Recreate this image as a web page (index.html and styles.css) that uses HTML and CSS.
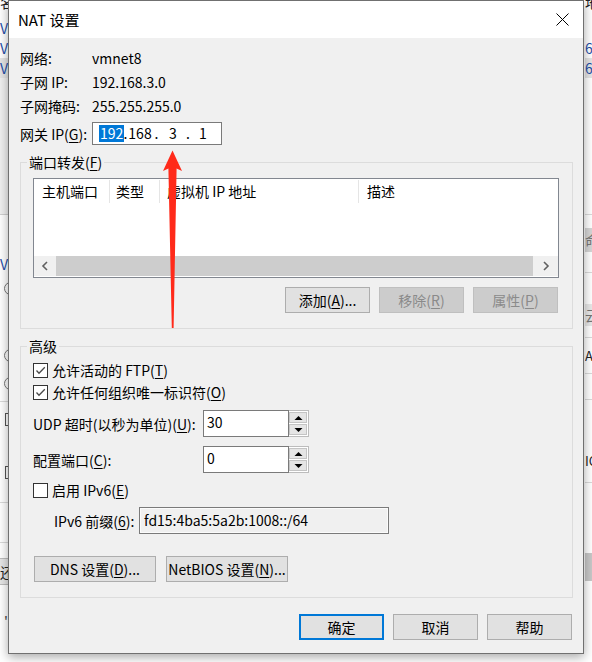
FILE: index.html
```html
<!DOCTYPE html>
<html lang="zh-CN">
<head>
<meta charset="utf-8">
<title>NAT 设置</title>
<link rel="stylesheet" href="styles.css">
</head>
<body>
<div class="screen">
  <div class="strip strip-left">
    <div class="bl h18"><span class="cut dark">名</span></div>
    <div class="bl h20"><span class="vtxt">V</span></div>
    <div class="bl h20"><span class="vtxt">V</span></div>
    <div class="bl h20 hl"><span class="vtxt">V</span></div>
    <div class="bl h137 panel"></div>
    <div class="bl h39"></div>
    <div class="bl h20"><span class="vtxt">V</span></div>
    <div class="bl h7"></div>
    <div class="bl h14"><span class="radio"></span></div>
    <div class="bl h53"></div>
    <div class="bl h14"><span class="radio"></span></div>
    <div class="bl h14"></div>
    <div class="bl h14"><span class="radio"></span></div>
    <div class="bl h12 lined"></div>
    <div class="bl h10"></div>
    <div class="bl h15"><span class="sq"></span></div>
    <div class="bl h38"></div>
    <div class="bl h15"><span class="sq"></span></div>
    <div class="bl h23 lined"></div>
    <div class="bl h40 lined"></div>
    <div class="bl h15"></div>
    <div class="bl h27 lbtn"><span class="dark">还</span></div>
    <div class="bl h30"></div>
    <div class="bl h14"><span class="tick">'</span></div>
  </div>

  <main class="dialog">
    <header class="titlebar">
      <span class="title">NAT 设置</span>
      <svg class="close" width="13" height="13" viewBox="0 0 13 13" aria-label="关闭">
        <path d="M0.5 0.5 L12.5 12.5 M12.5 0.5 L0.5 12.5" stroke="#000" stroke-width="1" fill="none"/>
      </svg>
    </header>

    <section class="body">
      <div class="info">
        <span>网络:</span><span>vmnet8</span>
        <span>子网 IP:</span><span>192.168.3.0</span>
        <span>子网掩码:</span><span>255.255.255.0</span>
      </div>
      <div class="gw-row">
        <span class="gw-label">网关 IP(<u>G</u>):</span>
        <div class="ipbox">
          <span class="ipf"><span class="selected">192</span></span>
          <span class="ipd d1">.</span>
          <span class="ipf">168</span>
          <span class="ipd d2">.</span>
          <span class="ipf">3</span>
          <span class="ipd d3">.</span>
          <span class="ipf">1</span>
        </div>
      </div>

      <fieldset class="group group-pf">
        <legend>端口转发(<u>F</u>)</legend>
        <div class="list">
          <div class="list-head">
            <span class="col c1">主机端口</span>
            <span class="col c2">类型</span>
            <span class="col c3">虚拟机 IP 地址</span>
            <span class="col c4">描述</span>
          </div>
          <div class="list-body"></div>
          <div class="hscroll">
            <span class="sb-btn sb-left">
              <svg width="8" height="10" viewBox="0 0 8 10"><path d="M6 1 L2 5 L6 9" stroke="#606060" stroke-width="1.6" fill="none"/></svg>
            </span>
            <span class="sb-thumb"></span>
            <span class="sb-btn sb-right">
              <svg width="8" height="10" viewBox="0 0 8 10"><path d="M2 1 L6 5 L2 9" stroke="#606060" stroke-width="1.6" fill="none"/></svg>
            </span>
          </div>
        </div>
        <div class="btn-row pf-btns">
          <button class="btn">添加(<u>A</u>)...</button>
          <button class="btn disabled">移除(<u>R</u>)</button>
          <button class="btn disabled">属性(<u>P</u>)</button>
        </div>
      </fieldset>

      <fieldset class="group group-adv">
        <legend>高级</legend>
        <label class="check">
          <span class="box"><svg width="13" height="13" viewBox="0 0 13 13"><path d="M2.5 6.5 L5 9.2 L10.8 3.2" stroke="#4a4a4a" stroke-width="1.3" fill="none"/></svg></span>
          <span>允许活动的 FTP(<u>T</u>)</span>
        </label>
        <label class="check">
          <span class="box"><svg width="13" height="13" viewBox="0 0 13 13"><path d="M2.5 6.5 L5 9.2 L10.8 3.2" stroke="#4a4a4a" stroke-width="1.3" fill="none"/></svg></span>
          <span>允许任何组织唯一标识符(<u>O</u>)</span>
        </label>

        <div class="field-row udp">
          <span class="field-label">UDP 超时(以秒为单位)(<u>U</u>):</span>
          <div class="spin">
            <span class="spin-input">30</span>
            <span class="spin-btns">
              <span class="spin-btn"><svg width="9" height="6" viewBox="0 0 9 6"><path d="M0.5 5 L4.5 1 L8.5 5 Z" fill="#000"/></svg></span>
              <span class="spin-btn"><svg width="9" height="6" viewBox="0 0 9 6"><path d="M0.5 1 L4.5 5 L8.5 1 Z" fill="#000"/></svg></span>
            </span>
          </div>
        </div>

        <div class="field-row port">
          <span class="field-label">配置端口(<u>C</u>):</span>
          <div class="spin">
            <span class="spin-input">0</span>
            <span class="spin-btns">
              <span class="spin-btn"><svg width="9" height="6" viewBox="0 0 9 6"><path d="M0.5 5 L4.5 1 L8.5 5 Z" fill="#000"/></svg></span>
              <span class="spin-btn"><svg width="9" height="6" viewBox="0 0 9 6"><path d="M0.5 1 L4.5 5 L8.5 1 Z" fill="#000"/></svg></span>
            </span>
          </div>
        </div>

        <label class="check ipv6">
          <span class="box"></span>
          <span>启用 IPv6(<u>E</u>)</span>
        </label>

        <div class="prefix-row">
          <span class="prefix-label">IPv6 前缀(<u>6</u>):</span>
          <span class="prefix-input">fd15:4ba5:5a2b:1008::/64</span>
        </div>

        <div class="btn-row adv-btns">
          <button class="btn wide">DNS 设置(<u>D</u>)...</button>
          <button class="btn wide">NetBIOS 设置(<u>N</u>)...</button>
        </div>
      </fieldset>

      <div class="btn-row footer">
        <button class="btn default">确定</button>
        <button class="btn">取消</button>
        <button class="btn">帮助</button>
      </div>
    </section>
  </main>

  <div class="strip strip-right">
    <div class="bl h12"><span class="cut dark">地</span></div>
    <div class="bl h26"></div>
    <div class="bl h20"><span class="num">68</span></div>
    <div class="bl h20 hl"><span class="num">68</span></div>
    <div class="bl h137 lined"></div>
    <div class="bl h13"></div>
    <div class="bl h24 rbtn"><span class="greytxt">命</span></div>
    <div class="bl h21 lined"></div>
    <div class="bl h31"></div>
    <div class="bl h22 rbox"><span class="greytxt">云</span></div>
    <div class="bl h12 lined"></div>
    <div class="bl h10"></div>
    <div class="bl h15"><span class="dark small">AT</span></div>
    <div class="bl h11 lined"></div>
    <div class="bl h26 lined"></div>
    <div class="bl h54"></div>
    <div class="bl h13"><span class="dark small">IC</span></div>
    <div class="bl h16 lined"></div>
    <div class="bl h70"></div>
    <div class="bl h28 rgrey"></div>
  </div>

  <div class="strip-bottom"></div>

  <svg class="arrow" width="592" height="662" viewBox="0 0 592 662" aria-hidden="true">
    <polygon points="172.5,150.5 182,171 176.6,168.5 173.6,328 171.8,328 168.4,168.5 163,171" fill="#ff2a1a"/>
  </svg>
</div>
</body>
</html>
```

FILE: styles.css
```css
* { box-sizing: border-box; }

html, body {
  margin: 0;
  padding: 0;
}

body {
  width: 592px;
  height: 662px;
  overflow: hidden;
  background: #ffffff;
  font-family: "Noto Sans CJK SC", "Noto Sans", sans-serif;
  font-size: 14px;
  color: #000;
}

u {
  text-decoration: underline;
  text-underline-offset: 2px;
  text-decoration-thickness: 1px;
}

.screen {
  position: relative;
  display: grid;
  grid-template-columns: 8px 576px 8px;
  grid-template-rows: 654px 8px;
  width: 592px;
  height: 662px;
}

/* ---------- background window fragments ---------- */
.strip {
  overflow: hidden;
  display: flex;
  flex-direction: column;
  font-size: 14px;
  line-height: 20px;
  background: #fff;
}
.strip-left { grid-column: 1; grid-row: 1 / 3; }
.strip-right { grid-column: 3; grid-row: 1 / 3; padding-left: 1px; }
.strip-bottom { grid-column: 2; grid-row: 2; background: #fff; }

.bl { flex: none; display: flex; align-items: center; overflow: hidden; white-space: nowrap; }
.h7 { height: 7px; } .h10 { height: 10px; } .h11 { height: 11px; } .h12 { height: 12px; }
.h13 { height: 13px; } .h14 { height: 14px; } .h15 { height: 15px; } .h16 { height: 16px; }
.h18 { height: 18px; } .h20 { height: 20px; } .h21 { height: 21px; } .h22 { height: 22px; }
.h23 { height: 23px; } .h24 { height: 24px; } .h26 { height: 26px; } .h27 { height: 27px; }
.h28 { height: 28px; } .h30 { height: 30px; } .h31 { height: 31px; } .h38 { height: 38px; }
.h39 { height: 39px; } .h40 { height: 40px; } .h53 { height: 53px; } .h54 { height: 54px; }
.h70 { height: 70px; } .h137 { height: 137px; }

.hl { background: #e5e5e5; }
.panel { background: #f0f0f0; border-bottom: 1px solid #d0d0d0; }
.lined { border-bottom: 1px solid #dadada; }
.cut { align-self: flex-start; margin-top: -8px; }
.dark { color: #222; }
.vtxt { color: #1f4fa8; font-size: 14px; }
.num { color: #1f4fa8; font-size: 14px; }
.small { font-size: 13px; }
.greytxt { color: #777; }
.radio { width: 13px; height: 13px; border: 1px solid #777; border-radius: 50%; margin-left: 4px; flex: none; }
.sq { width: 13px; height: 13px; border: 1px solid #555; margin-left: 5px; flex: none; }
.lbtn { background: #e6e6e6; border-top: 1px solid #bdbdbd; border-bottom: 1px solid #bdbdbd; }
.tick { color: #444; margin-left: 4px; }
.rbtn { background: #d6d6d6; }
.rbox { background: #e8e8e8; }
.rgrey { background: #c8c8c8; }

/* ---------- dialog ---------- */
.dialog {
  grid-column: 2;
  grid-row: 1;
  position: relative;
  z-index: 1;
  display: flex;
  flex-direction: column;
  border: 1px solid #707070;
  background: #f0f0f0;
  box-shadow: 0 3px 10px rgba(0, 0, 0, 0.35);
}

.titlebar {
  flex: none;
  height: 37px;
  background: #ffffff;
  display: flex;
  align-items: center;
  justify-content: space-between;
  padding: 0 14px 0 9px;
}

.title {
  font-size: 15px;
  line-height: 20px;
}

.close { display: block; }

.body {
  flex: 1;
  display: flex;
  flex-direction: column;
  padding: 8px 10px 13px 11px;
}

.info {
  display: grid;
  grid-template-columns: 72px 1fr;
  grid-auto-rows: 24px;
  line-height: 24px;
}

.gw-row {
  margin-top: 4px;
  height: 23px;
  display: flex;
  align-items: center;
}

.gw-label { width: 72px; flex: none; }

.ipbox {
  width: 130px;
  height: 23px;
  border: 1px solid #7a7a7a;
  background: #fff;
  display: flex;
  align-items: center;
  padding-left: 6px;
  line-height: 17px;
}

.ipf { width: 24px; text-align: center; flex: none; }
.ipd { text-align: center; flex: none; }
.d1 { width: 5px; }
.d2 { width: 9px; }
.d3 { width: 6px; }
.selected { background: #0078d7; color: #fff; display: inline-block; padding: 0 1px; }

/* ---------- group boxes ---------- */
.group {
  margin: 9px 0 0;
  min-width: 0;
  border: 1px solid #dcdcdc;
  display: flex;
  flex-direction: column;
}

.group legend {
  padding: 0 2px;
  margin-left: -6px;
  line-height: 16px;
  font-size: 14px;
}

.group-pf { padding: 8px 13px 15px 12px; }
.group-adv { padding: 5px 13px 15px 12px; }

.list {
  height: 100px;
  border: 1px solid #828790;
  background: #fff;
  display: flex;
  flex-direction: column;
}

.list-head {
  display: grid;
  grid-template-columns: 76px 50px 199px 1fr;
  height: 25px;
  flex: none;
}

.col {
  height: 23px;
  margin-top: 1px;
  line-height: 23px;
  border-right: 1px solid #e5e5e5;
  white-space: nowrap;
  overflow: hidden;
}
.c1 { padding-left: 8px; }
.c2 { padding-left: 6px; }
.c3 { padding-left: 7px; }
.c4 { padding-left: 8px; border-right: none; }

.list-body { flex: 1; }

.hscroll {
  flex: none;
  height: 20px;
  margin-bottom: 1px;
  display: flex;
  background: #f0f0f0;
}

.sb-btn {
  flex: none;
  display: flex;
  align-items: center;
  justify-content: center;
  background: #f0f0f0;
}
.sb-left { width: 22px; }
.sb-right { width: 25px; }
.sb-thumb { flex: 1; background: #cdcdcd; }

/* ---------- buttons ---------- */
.btn-row { display: flex; }
.pf-btns { margin-top: 9px; justify-content: flex-end; gap: 9px; margin-right: 1px; }
.adv-btns { margin-top: 22px; gap: 10px; padding-left: 1px; }
.footer { margin-top: 16px; justify-content: flex-end; gap: 9px; margin-right: 1px; }

.btn {
  width: 85px;
  height: 26px;
  margin: 0;
  padding: 0;
  border: 1px solid #adadad;
  background: #e1e1e1;
  font-family: inherit;
  font-size: 14px;
  line-height: 24px;
  color: #000;
  text-align: center;
  white-space: nowrap;
}
.btn.wide { width: 122px; }
.btn.disabled { background: #cccccc; border-color: #bfbfbf; color: #8a8a8a; }
.btn.default { border: 2px solid #0078d7; line-height: 22px; }

/* ---------- advanced controls ---------- */
.check {
  height: 22px;
  display: flex;
  align-items: center;
  gap: 4px;
  white-space: nowrap;
}

.box {
  width: 15px;
  height: 15px;
  flex: none;
  border: 1px solid #333;
  background: #fff;
  display: flex;
  align-items: center;
  justify-content: center;
}

.field-row {
  height: 27px;
  display: flex;
  align-items: center;
}
.udp { margin-top: 7px; }
.port { margin-top: 9px; }
.check.ipv6 { margin-top: 6px; }

.field-label { width: 170px; flex: none; white-space: nowrap; }

.spin {
  width: 106px;
  height: 27px;
  display: flex;
}

.spin-input {
  flex: 1;
  border: 1px solid #7a7a7a;
  background: #fff;
  padding: 1px 3px 0;
  line-height: 20px;
}

.spin-btns {
  width: 20px;
  flex: none;
  display: flex;
  flex-direction: column;
  gap: 1px;
  padding: 1px 1px 1px 0;
  border: 1px solid #bcbcbc;
  border-left: none;
  background: #fff;
}

.spin-btn {
  flex: 1;
  display: flex;
  align-items: center;
  justify-content: center;
  background: #e5e5e5;
  border: 1px solid #c4c4c4;
}

.prefix-row {
  margin-top: 6px;
  height: 27px;
  display: flex;
  align-items: center;
  padding-left: 21px;
}

.prefix-label { width: 85px; flex: none; white-space: nowrap; }

.prefix-input {
  width: 250px;
  height: 27px;
  border: 1px solid #7a7a7a;
  box-shadow: inset 0 0 0 1px #fbfbfb;
  background: #f0f0f0;
  padding: 2px 4px 0;
  line-height: 20px;
  white-space: nowrap;
}

/* ---------- annotation arrow ---------- */
.arrow {
  position: absolute;
  left: 0;
  top: 0;
  z-index: 2;
  pointer-events: none;
}
```
